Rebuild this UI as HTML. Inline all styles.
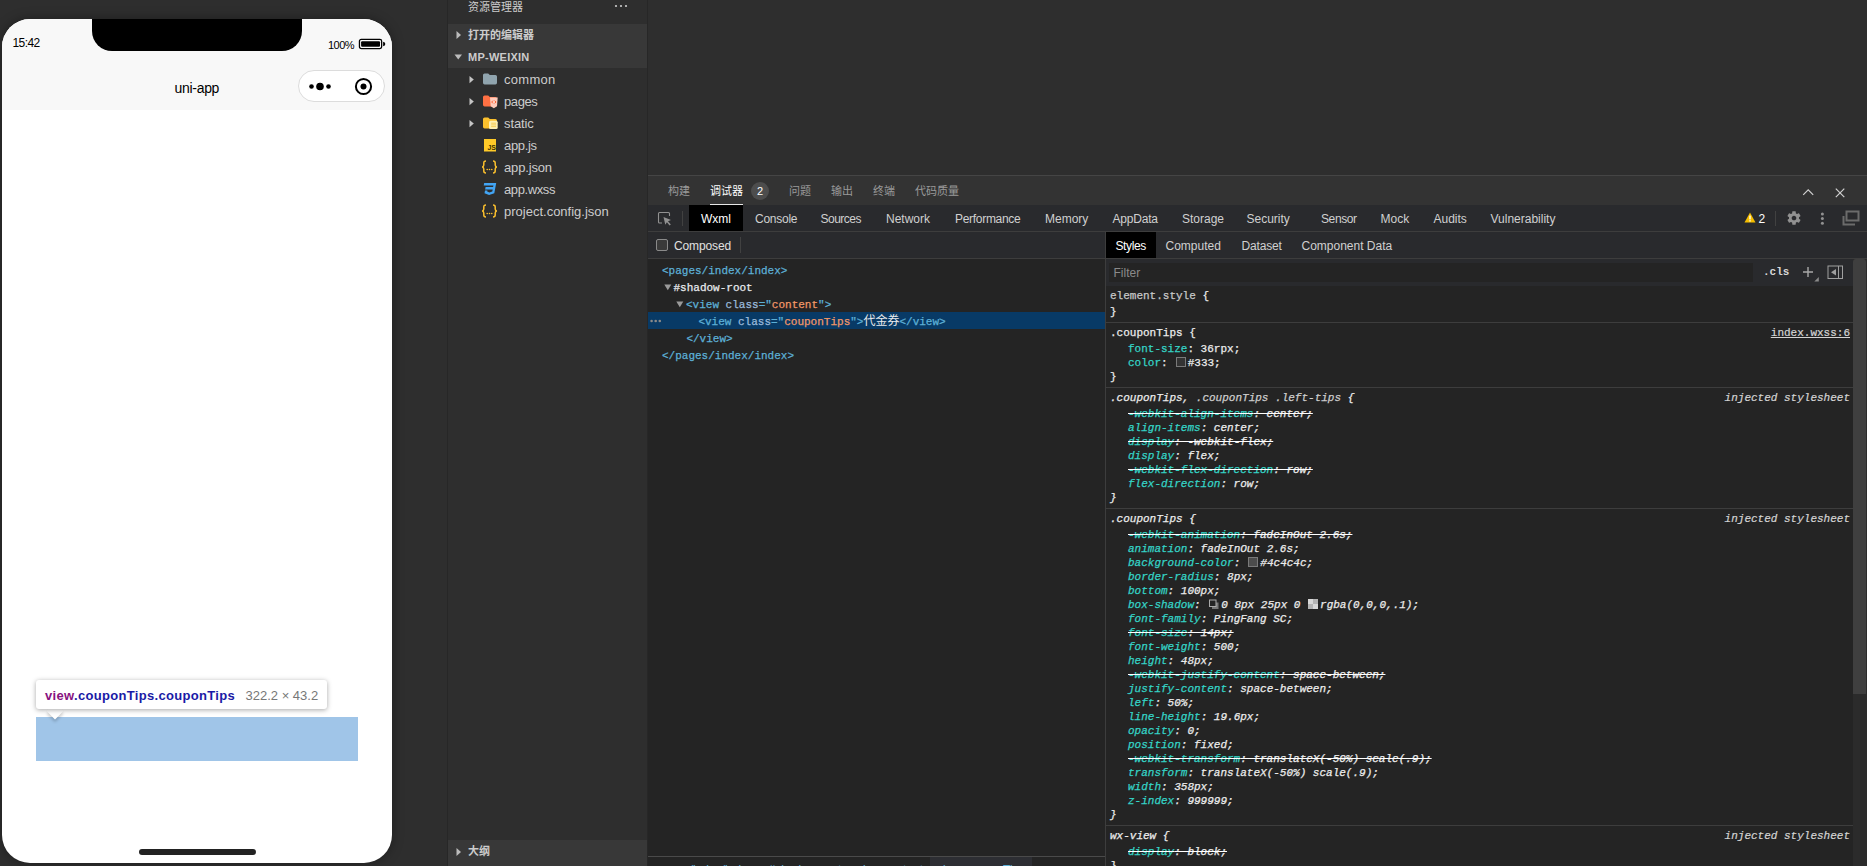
<!DOCTYPE html><html lang="zh-CN"><head><meta charset="utf-8"><title>uni-app</title><style>
*{box-sizing:border-box;margin:0;padding:0}
html,body{width:1867px;height:866px;overflow:hidden;background:#2e2e2e}
body{position:relative;font-family:"Liberation Sans","Noto Sans CJK SC",sans-serif;font-size:12px;color:#ccc}
.abs{position:absolute}
.t{position:absolute;white-space:nowrap;line-height:1}
/* phone */
#phone{position:absolute;left:2px;top:19px;width:390px;height:844px;background:#fff;border-radius:28px;overflow:hidden;box-shadow:0 0 12px rgba(0,0,0,.35)}
#nav{position:absolute;left:0;top:0;width:390px;height:91px;background:#f8f8f8}
#notch{position:absolute;left:90px;top:-20px;width:210px;height:52px;background:#000;border-radius:20px}
#capsule{position:absolute;left:296px;top:51px;width:87px;height:32px;border:1px solid #dcdcdc;border-radius:16px;background:#fff}
#home{position:absolute;left:137px;top:830px;width:117px;height:6px;border-radius:3px;background:#222}
#hl{position:absolute;left:34px;top:698px;width:322px;height:44px;background:#a0c5e8}
#tip{position:absolute;left:34px;top:661px;width:291px;height:29px;background:#fff;border-radius:3px;box-shadow:0 1px 5px rgba(0,0,0,.35)}
#tiparrow{position:absolute;left:46.5px;top:686px;width:12px;height:12px;background:#fff;transform:rotate(45deg);box-shadow:2px 2px 3px rgba(0,0,0,.18)}
/* explorer */
#exp{position:absolute;left:447px;top:0;width:201px;height:866px;background:#2e2e2e;border-left:1px solid #272727;border-right:1px solid #272727}
.sec{position:absolute;left:0;width:199px;height:22px;background:#383838}
.ui11{font-size:11px}
.b{font-weight:bold}
.row{position:absolute;left:0;width:199px;height:22px}
.fname{position:absolute;left:56px;top:1px;line-height:22px;font-size:13px;color:#ccc;white-space:nowrap}
/* panel */
#ptabs{position:absolute;left:648px;top:175px;width:1219px;height:30px;background:#333;border-top:1px solid #454545}
.pt{position:absolute;top:9px;font-size:11px;line-height:12px;color:#999;white-space:nowrap}
#dtbar{position:absolute;left:648px;top:205px;width:1219px;height:27px;background:#292a2d;border-bottom:1px solid #3d3d3d}
.dt{position:absolute;top:1px;line-height:26px;font-size:12px;color:#d0d0d0;white-space:nowrap}
#row2{position:absolute;left:648px;top:232px;width:1219px;height:27px;background:#292a2d;border-bottom:1px solid #3d3d3d}
#tree{position:absolute;left:648px;top:259px;width:457px;height:597px;background:#242424;font-family:"Liberation Mono","Noto Sans CJK SC",monospace;font-size:11px}
.tl{position:absolute;height:17px;line-height:17px;white-space:pre;-webkit-text-stroke:0.25px}
.tag{color:#5db0d7}.an{color:#9bbbdc}.av{color:#f29766}
#styles{position:absolute;left:1106px;top:259px;width:761px;height:607px;background:#242424;font-family:"Liberation Mono","Noto Sans CJK SC",monospace;font-size:11px;overflow:hidden}
.sl{position:absolute;height:14px;line-height:14px;white-space:pre;color:#ececec;-webkit-text-stroke:0.25px}
.sel{left:4px}
.pr{left:22px}
.pn{color:#35d4c7}
.it{font-style:italic}
.st{text-decoration:line-through;text-decoration-color:#fff}
.src{position:absolute;right:17px;height:14px;line-height:14px;white-space:pre;color:#d4d4d4;-webkit-text-stroke:0.2px}
.sep{position:absolute;left:0;width:747px;height:1px;background:#3d3d3d}
.sw{display:inline-block;width:10px;height:10px;margin:0 2px 0 1.5px;vertical-align:-1px;border:1px solid #7a7a7a}
</style></head><body>
<div id="phone"><div id="nav"></div><div id="notch"></div>
<span class="t" style="left:10.5px;top:18px;font-size:12px;color:#000;letter-spacing:-0.6px">15:42</span>
<span class="t" style="left:326px;top:21px;font-size:11px;color:#000;letter-spacing:-0.55px">100%</span>
<svg class="abs" style="left:356px;top:19px" width="28" height="12" viewBox="0 0 28 12"><rect x="1.45" y="1.45" width="22.2" height="9.1" rx="1.8" fill="none" stroke="#000" stroke-width="1.3"/><rect x="3.1" y="3.2" width="18.9" height="5.6" rx="1" fill="#000"/><path d="M25.1 3.8 q2.2 0.2 2.2 2.2 q0 2 -2.2 2.2z" fill="#000"/></svg>
<span class="t" style="left:172.5px;top:62px;font-size:14px;letter-spacing:-0.3px;color:#000">uni-app</span>
<div id="capsule"><svg class="abs" style="left:0;top:0" width="85" height="30" viewBox="0 0 85 30"><circle cx="12.5" cy="15.5" r="2.3" fill="#000"/><circle cx="21" cy="15.5" r="3.8" fill="#000"/><circle cx="29.5" cy="15.5" r="2.3" fill="#000"/><circle cx="64.5" cy="15.5" r="7.6" fill="none" stroke="#000" stroke-width="2"/><circle cx="64.5" cy="15.5" r="3" fill="#000"/></svg></div>
<div id="hl"></div><div id="tiparrow"></div><div id="tip"></div>
<span class="t b" style="left:43px;top:670px;font-size:13px;letter-spacing:0.32px;color:#881280" id="tipa">view<span style="color:#1a1aa6">.couponTips.couponTips</span></span>
<span class="t" style="left:243.5px;top:670px;font-size:13px;color:#777" id="tipb">322.2 × 43.2</span>
<div id="home"></div></div>
<div id="exp">
<span class="t ui11" style="left:20px;top:2px;color:#ccc">资源管理器</span>
<svg class="abs" style="left:166px;top:3px" width="14" height="6"><circle cx="2" cy="3" r="1.1" fill="#ccc"/><circle cx="7" cy="3" r="1.1" fill="#ccc"/><circle cx="12" cy="3" r="1.1" fill="#ccc"/></svg>
<div class="sec" style="top:24px"><svg class="abs" style="left:8px;top:6px" width="6" height="10"><path d="M0.5 1 L5 5 L0.5 9z" fill="#bbb"/></svg><span class="t ui11 b" style="left:20px;top:6px;color:#ccc">打开的编辑器</span></div>
<div class="sec" style="top:46px"><svg class="abs" style="left:6px;top:8px" width="9" height="6"><path d="M0.5 0.5 L8 0.5 L4.25 5.5z" fill="#bbb"/></svg><span class="t ui11 b" style="left:20px;top:6px;letter-spacing:0.25px;color:#ccc">MP-WEIXIN</span></div>
<div class="row" style="top:68px"><svg class="abs" style="left:21px;top:7px" width="6" height="9"><path d="M0.5 1 L4.8 4.6 L0.5 8.2z" fill="#c5c5c5"/></svg><svg class="abs" style="left:34px;top:4px" width="17" height="15" viewBox="0 0 17 15"><path d="M1 3 q0 -1.6 1.6 -1.6 h3.6 l1.6 1.6 h5.6 q1.6 0 1.6 1.6 v6.2 q0 1.6 -1.6 1.6 h-10.8 q-1.6 0 -1.6 -1.6z" fill="#90a4ae"/></svg><span class="fname" style="letter-spacing:0.3px">common</span></div>
<div class="row" style="top:90px"><svg class="abs" style="left:21px;top:7px" width="6" height="9"><path d="M0.5 1 L4.8 4.6 L0.5 8.2z" fill="#c5c5c5"/></svg><svg class="abs" style="left:34px;top:4px" width="17" height="15" viewBox="0 0 17 15"><path d="M1 3 q0 -1.6 1.6 -1.6 h3.6 l1.6 1.6 h5.6 q1.6 0 1.6 1.6 v6.2 q0 1.6 -1.6 1.6 h-10.8 q-1.6 0 -1.6 -1.6z" fill="#ff7043"/><path d="M8 3.5 h7.7 l-0.7 8.8 l-3.15 1.9 l-3.15 -1.9z" fill="#ffccbc"/><path d="M11 6.6 L9.7 8 L11 9.4 M12.7 6.6 L14 8 L12.7 9.4" stroke="#ff5722" stroke-width="0.9" fill="none"/></svg><span class="fname" style="letter-spacing:-0.4px">pages</span></div>
<div class="row" style="top:112px"><svg class="abs" style="left:21px;top:7px" width="6" height="9"><path d="M0.5 1 L4.8 4.6 L0.5 8.2z" fill="#c5c5c5"/></svg><svg class="abs" style="left:34px;top:4px" width="17" height="15" viewBox="0 0 17 15"><path d="M1 3 q0 -1.6 1.6 -1.6 h3.6 l1.6 1.6 h5.6 q1.6 0 1.6 1.6 v6.2 q0 1.6 -1.6 1.6 h-10.8 q-1.6 0 -1.6 -1.6z" fill="#fbc02d"/><rect x="7" y="4.7" width="8.7" height="8.4" rx="1.6" fill="#fff0b3"/><path d="M9.2 7.2 h4.8 M9.2 8.9 h4.8 M9.2 10.6 h4.8" stroke="#f4c542" stroke-width="0.8" fill="none"/></svg><span class="fname" style="letter-spacing:-0.1px">static</span></div>
<div class="row" style="top:134px"><svg class="abs" style="left:35.5px;top:5px" width="12.5" height="12.5" viewBox="0 0 13 13"><rect width="13" height="13" fill="#ffca28"/><text x="3.6" y="11.4" font-family="Liberation Sans,sans-serif" font-size="7.2" font-weight="bold" fill="#3b3000">JS</text></svg><span class="fname" style="letter-spacing:-0.35px">app.js</span></div>
<div class="row" style="top:156px"><svg class="abs" style="left:33px;top:4px" width="17" height="14" viewBox="0 0 17 14"><path d="M5 1 q-2.2 0 -2.2 2 v2 q0 1.7 -1.6 2 q1.6 0.3 1.6 2 v2 q0 2 2.2 2 M12 1 q2.2 0 2.2 2 v2 q0 1.7 1.6 2 q-1.6 0.3 -1.6 2 v2 q0 2 -2.2 2" fill="none" stroke="#fbc02d" stroke-width="1.5"/><circle cx="6.2" cy="9.5" r="0.8" fill="#fbc02d"/><circle cx="8.5" cy="9.5" r="0.8" fill="#fbc02d"/><circle cx="10.8" cy="9.5" r="0.8" fill="#fbc02d"/></svg><span class="fname" style="letter-spacing:-0.15px">app.json</span></div>
<div class="row" style="top:178px"><svg class="abs" style="left:34px;top:4px" width="15" height="14" viewBox="0 0 15 14"><path d="M2.2 1 h12 l-1.9 10.2 l-5.2 1.8 l-4.6 -1.8 l0.5 -2.6 h2.4 l-0.2 1 l2.2 0.9 l2.9 -1 l0.4 -2.1 h-7.6 l0.5 -2.3 h7.5 l0.3 -1.5 h-9.7z" fill="#42a5f5"/></svg><span class="fname" style="letter-spacing:-0.4px">app.wxss</span></div>
<div class="row" style="top:200px"><svg class="abs" style="left:33px;top:4px" width="17" height="14" viewBox="0 0 17 14"><path d="M5 1 q-2.2 0 -2.2 2 v2 q0 1.7 -1.6 2 q1.6 0.3 1.6 2 v2 q0 2 2.2 2 M12 1 q2.2 0 2.2 2 v2 q0 1.7 1.6 2 q-1.6 0.3 -1.6 2 v2 q0 2 -2.2 2" fill="none" stroke="#fbc02d" stroke-width="1.5"/><circle cx="6.2" cy="9.5" r="0.8" fill="#fbc02d"/><circle cx="8.5" cy="9.5" r="0.8" fill="#fbc02d"/><circle cx="10.8" cy="9.5" r="0.8" fill="#fbc02d"/></svg><span class="fname">project.config.json</span></div>
<div class="sec" style="top:840px;height:26px"><svg class="abs" style="left:8px;top:7px" width="6" height="10"><path d="M0.5 1 L5 5 L0.5 9z" fill="#bbb"/></svg><span class="t ui11 b" style="left:20px;top:6px;color:#ccc">大纲</span></div>
</div>
<div id="ptabs">
<span class="pt" style="left:20px;">构建</span>
<span class="pt" style="left:62px;color:#fff">调试器</span>
<span class="pt" style="left:141px;">问题</span>
<span class="pt" style="left:183px;">输出</span>
<span class="pt" style="left:225px;">终端</span>
<span class="pt" style="left:267px;">代码质量</span>
<div class="abs" style="left:62px;top:28px;width:33px;height:1px;background:#e7e7e7"></div>
<div class="abs" style="left:103px;top:6px;width:18px;height:18px;border-radius:9px;background:#4d4d4d;color:#fff;font-size:11px;line-height:18px;text-align:center">2</div>
<svg class="abs" style="left:1154px;top:13px" width="13" height="8"><path d="M1.2 5.9 L6.2 0.9 L11.2 5.9" fill="none" stroke="#d0d0d0" stroke-width="1.2"/></svg>
<svg class="abs" style="left:1186px;top:12px" width="12" height="11"><path d="M1.8 0.6 L10.3 9.1 M10.3 0.6 L1.8 9.1" fill="none" stroke="#d0d0d0" stroke-width="1.2"/></svg>
</div>
<div id="dtbar">
<svg class="abs" style="left:9px;top:6px" width="16" height="16" viewBox="0 0 16 16"><path d="M12.5 5 V2.5 Q12.5 1.5 11.5 1.5 H2.5 Q1.5 1.5 1.5 2.5 V11 Q1.5 12 2.5 12 H5" fill="none" stroke="#919191" stroke-width="1.1"/><path d="M6.5 6 L14 9 L11 10.3 L13.8 13.4 L12.6 14.4 L9.9 11.3 L8.3 13.8z" fill="#919191"/></svg>
<div class="abs" style="left:34px;top:6px;width:1px;height:15px;background:#414141"></div>
<div class="abs" style="left:41px;top:0;width:54px;height:26px;background:#000"></div>
<span class="dt" style="left:53px;color:#fff">Wxml</span>
<span class="dt" style="left:107px;letter-spacing:-0.25px;">Console</span>
<span class="dt" style="left:172.5px;letter-spacing:-0.5px;">Sources</span>
<span class="dt" style="left:238px;">Network</span>
<span class="dt" style="left:307px;letter-spacing:-0.3px;">Performance</span>
<span class="dt" style="left:397px;">Memory</span>
<span class="dt" style="left:464.5px;letter-spacing:-0.2px;">AppData</span>
<span class="dt" style="left:534px;">Storage</span>
<span class="dt" style="left:598.5px;">Security</span>
<span class="dt" style="left:673px;letter-spacing:-0.4px;">Sensor</span>
<span class="dt" style="left:732.5px;">Mock</span>
<span class="dt" style="left:785.5px;">Audits</span>
<span class="dt" style="left:842.5px;">Vulnerability</span>
<svg class="abs" style="left:1096px;top:7px" width="12" height="11" viewBox="0 0 12 11"><path d="M6 0.5 L11.5 10.5 H0.5z" fill="#f4bd00"/><rect x="5.3" y="3.6" width="1.4" height="3.8" fill="#fff"/><rect x="5.3" y="8.2" width="1.4" height="1.3" fill="#fff"/></svg>
<span class="dt" style="left:1110.5px;color:#fff">2</span>
<div class="abs" style="left:1127px;top:6px;width:1px;height:15px;background:#414141"></div>
<svg class="abs" style="left:1138px;top:5px" width="16" height="16" viewBox="0 0 24 24"><path fill="#919191" d="M19.43 12.98c.04-.32.07-.64.07-.98s-.03-.66-.07-.98l2.11-1.65c.19-.15.24-.42.12-.64l-2-3.46c-.12-.22-.39-.3-.61-.22l-2.49 1c-.52-.4-1.08-.73-1.69-.98l-.38-2.65C14.46 2.18 14.25 2 14 2h-4c-.25 0-.46.18-.49.42l-.38 2.65c-.61.25-1.17.59-1.69.98l-2.49-1c-.23-.09-.49 0-.61.22l-2 3.46c-.13.22-.07.49.12.64l2.11 1.65c-.04.32-.07.65-.07.98s.03.66.07.98l-2.11 1.65c-.19.15-.24.42-.12.64l2 3.46c.12.22.39.3.61.22l2.49-1c.52.4 1.08.73 1.69.98l.38 2.65c.03.24.24.42.49.42h4c.25 0 .46-.18.49-.42l.38-2.65c.61-.25 1.17-.59 1.69-.98l2.49 1c.23.09.49 0 .61-.22l2-3.46c.12-.22.07-.49-.12-.64l-2.11-1.65zM12 15.5c-1.93 0-3.5-1.57-3.5-3.5s1.570-3.5 3.5-3.5 3.5 1.570 3.5 3.5-1.570 3.500-3.500 3.500z"/></svg>
<svg class="abs" style="left:1172px;top:7px" width="5" height="14"><circle cx="2.4" cy="2" r="1.5" fill="#919191"/><circle cx="2.4" cy="6.6" r="1.5" fill="#919191"/><circle cx="2.4" cy="11.2" r="1.5" fill="#919191"/></svg>
<svg class="abs" style="left:1194px;top:5px" width="18" height="17" viewBox="0 0 18 17"><path d="M4.5 1.5 H16.5 V10.5 H4.5z" fill="none" stroke="#6b6b6b" stroke-width="2"/><path d="M1.5 6 V14.5 H13" fill="none" stroke="#6b6b6b" stroke-width="2"/></svg>
</div>
<div id="row2">
<div class="abs" style="left:8px;top:7px;width:12px;height:12px;border:1px solid #8a8a8a;border-radius:2px;background:#3a3a3a"></div>
<span class="dt" style="left:26px;letter-spacing:-0.13px;color:#e0e0e0">Composed</span>
<div class="abs" style="left:92px;top:5px;width:1px;height:16px;background:#414141"></div>
<div class="abs" style="left:457px;top:0;width:1px;height:27px;background:#3d3d3d"></div>
<div class="abs" style="left:458px;top:0;width:50px;height:26px;background:#000"></div>
<span class="dt" style="left:467.5px;letter-spacing:-0.4px;color:#fff">Styles</span>
<span class="dt" style="left:517.5px;">Computed</span>
<span class="dt" style="left:593.5px;letter-spacing:-0.15px;">Dataset</span>
<span class="dt" style="left:653.5px;">Component Data</span>
</div>
<div id="tree">
<div class="abs" style="left:0;top:53px;width:457px;height:17px;background:#083a66"></div>
<div class="tl" style="left:14px;top:4px"><span class="tag">&lt;pages/index/index&gt;</span></div>
<svg class="abs" style="left:16px;top:25px" width="8" height="7"><path d="M0.3 0.5 H7.3 L3.8 6.2z" fill="#9a9a9a"/></svg>
<div class="tl" style="left:25.5px;top:21px"><span style="color:#e8eaed">#shadow-root</span></div>
<svg class="abs" style="left:28px;top:42px" width="8" height="7"><path d="M0.3 0.5 H7.3 L3.8 6.2z" fill="#9a9a9a"/></svg>
<div class="tl" style="left:38px;top:38px"><span class="tag">&lt;view </span><span class="an">class</span><span class="tag">="</span><span class="av">content</span><span class="tag">"&gt;</span></div>
<svg class="abs" style="left:2px;top:59.5px" width="13" height="4"><circle cx="1.6" cy="2" r="1.3" fill="#8a8a8a"/><circle cx="5.7" cy="2" r="1.3" fill="#8a8a8a"/><circle cx="9.8" cy="2" r="1.3" fill="#8a8a8a"/></svg>
<div class="tl" style="left:50.4px;top:55px"><span class="tag">&lt;view </span><span class="an">class</span><span class="tag">="</span><span class="av">couponTips</span><span class="tag">"&gt;</span><span style="color:#e8eaed;font-size:12px;-webkit-text-stroke:0">代金券</span><span class="tag">&lt;/view&gt;</span></div>
<div class="tl" style="left:38.4px;top:72px"><span class="tag">&lt;/view&gt;</span></div>
<div class="tl" style="left:14px;top:89px"><span class="tag">&lt;/pages/index/index&gt;</span></div>
</div>
<div class="abs" style="left:648px;top:856px;width:457px;height:10px;background:#242424;border-top:1px solid #4a4a4a;overflow:hidden;font-size:12px;color:#5db0d7"><div class="abs" style="left:282px;top:0;width:102px;height:10px;background:#2d2e33"></div><span class="t" style="left:9px;top:5px;line-height:16px">pages/index/index</span><span class="t" style="left:120.5px;top:5px;line-height:16px">#shadow-root</span><span class="t" style="left:209px;top:5px;line-height:16px">view.content</span><span class="t" style="left:289px;top:5px;line-height:16px">view.couponTips</span></div>
<div class="abs" style="left:1105px;top:259px;width:1px;height:607px;background:#3d3d3d"></div>
<div id="styles">
<div class="abs" style="left:0;top:0;width:747px;height:27px;background:#292a2d"></div>
<div class="abs" style="left:3px;top:4px;width:644px;height:19px;background:#242424"></div>
<span class="t" style="left:7.5px;top:8px;font-size:12px;font-family:'Liberation Sans',sans-serif;color:#8a8a8a">Filter</span>
<span class="t b" style="left:657px;top:8px;font-size:11px;color:#d8d8d8">.cls</span>
<svg class="abs" style="left:696px;top:7px" width="18" height="17"><path d="M6 1 V11 M1 6 H11" stroke="#a8a8a8" stroke-width="1.4" fill="none"/><path d="M16.8 11 V15.5 H12.3z" fill="#8a8a8a"/></svg>
<svg class="abs" style="left:721px;top:6px" width="17" height="15"><rect x="1" y="1" width="14.5" height="12.5" fill="none" stroke="#a0a0a0" stroke-width="1"/><path d="M11.5 1 V13.5" stroke="#a0a0a0" stroke-width="1"/><path d="M9 4 V10.5 L4 7.25z" fill="#a0a0a0"/></svg>
<div class="abs" style="left:746.5px;top:0;width:14.5px;height:607px;background:#2b2b2b"></div>
<div class="abs" style="left:746.5px;top:0;width:13.5px;height:435px;background:#3f3f3f;border-radius:3px 3px 0 0"></div>
<div class="sl sel" style="top:30px"><span style="color:#c8c8c8">element.style</span> {</div>
<div class="sl sel" style="top:46px">}</div>
<div class="sep" style="top:63px"></div>
<div class="sl sel" style="top:67px">.couponTips {</div>
<div class="src" style="top:67px;text-decoration:underline">index.wxss:6</div>
<div class="sl pr" style="top:83px"><span class="pn">font-size</span>: 36rpx;</div>
<div class="sl pr" style="top:97px"><span class="pn">color</span>: <span class="sw" style="background:#333"></span>#333;</div>
<div class="sl sel" style="top:111px">}</div>
<div class="sep" style="top:128px"></div>
<div class="sl sel it" style="top:132px">.couponTips,<span style="color:#cdcdcd"> .couponTips .left-tips</span> {</div>
<div class="src it" style="top:132px;">injected stylesheet</div>
<div class="sl pr it st" style="top:148px"><span class="pn">-webkit-align-items</span>: center;</div>
<div class="sl pr it" style="top:162px"><span class="pn">align-items</span>: center;</div>
<div class="sl pr it st" style="top:176px"><span class="pn">display</span>: -webkit-flex;</div>
<div class="sl pr it" style="top:190px"><span class="pn">display</span>: flex;</div>
<div class="sl pr it st" style="top:204px"><span class="pn">-webkit-flex-direction</span>: row;</div>
<div class="sl pr it" style="top:218px"><span class="pn">flex-direction</span>: row;</div>
<div class="sl sel it" style="top:232px">}</div>
<div class="sep" style="top:249px"></div>
<div class="sl sel it" style="top:253px">.couponTips {</div>
<div class="src it" style="top:253px;">injected stylesheet</div>
<div class="sl pr it st" style="top:269px"><span class="pn">-webkit-animation</span>: fadeInOut 2.6s;</div>
<div class="sl pr it" style="top:283px"><span class="pn">animation</span>: fadeInOut 2.6s;</div>
<div class="sl pr it" style="top:297px"><span class="pn">background-color</span>: <span class="sw" style="background:#4c4c4c"></span>#4c4c4c;</div>
<div class="sl pr it" style="top:311px"><span class="pn">border-radius</span>: 8px;</div>
<div class="sl pr it" style="top:325px"><span class="pn">bottom</span>: 100px;</div>
<div class="sl pr it" style="top:339px"><span class="pn">box-shadow</span>: <svg style="display:inline-block;vertical-align:-2px;margin:0 2px" width="10" height="11" viewBox="0 0 10 11"><rect x="3" y="3.5" width="6.5" height="6.5" fill="#777"/><rect x="0.5" y="1" width="6.5" height="6.5" fill="#242424" stroke="#aaa" stroke-width="1"/></svg>0 8px 25px 0 <span class="sw" style="border:0;margin-left:1px;background:conic-gradient(#b4b4b4 25%,#d8d8d8 0 50%,#b4b4b4 0 75%,#d8d8d8 0)"></span>rgba(0,0,0,.1);</div>
<div class="sl pr it" style="top:353px"><span class="pn">font-family</span>: PingFang SC;</div>
<div class="sl pr it st" style="top:367px"><span class="pn">font-size</span>: 14px;</div>
<div class="sl pr it" style="top:381px"><span class="pn">font-weight</span>: 500;</div>
<div class="sl pr it" style="top:395px"><span class="pn">height</span>: 48px;</div>
<div class="sl pr it st" style="top:409px"><span class="pn">-webkit-justify-content</span>: space-between;</div>
<div class="sl pr it" style="top:423px"><span class="pn">justify-content</span>: space-between;</div>
<div class="sl pr it" style="top:437px"><span class="pn">left</span>: 50%;</div>
<div class="sl pr it" style="top:451px"><span class="pn">line-height</span>: 19.6px;</div>
<div class="sl pr it" style="top:465px"><span class="pn">opacity</span>: 0;</div>
<div class="sl pr it" style="top:479px"><span class="pn">position</span>: fixed;</div>
<div class="sl pr it st" style="top:493px"><span class="pn">-webkit-transform</span>: translateX(-50%) scale(.9);</div>
<div class="sl pr it" style="top:507px"><span class="pn">transform</span>: translateX(-50%) scale(.9);</div>
<div class="sl pr it" style="top:521px"><span class="pn">width</span>: 358px;</div>
<div class="sl pr it" style="top:535px"><span class="pn">z-index</span>: 999999;</div>
<div class="sl sel it" style="top:549px">}</div>
<div class="sep" style="top:566px"></div>
<div class="sl sel it" style="top:570px">wx-view {</div>
<div class="src it" style="top:570px;">injected stylesheet</div>
<div class="sl pr it st" style="top:586px"><span class="pn">display</span>: block;</div>
<div class="sl sel it" style="top:600px">}</div>
</div>
</body></html>
